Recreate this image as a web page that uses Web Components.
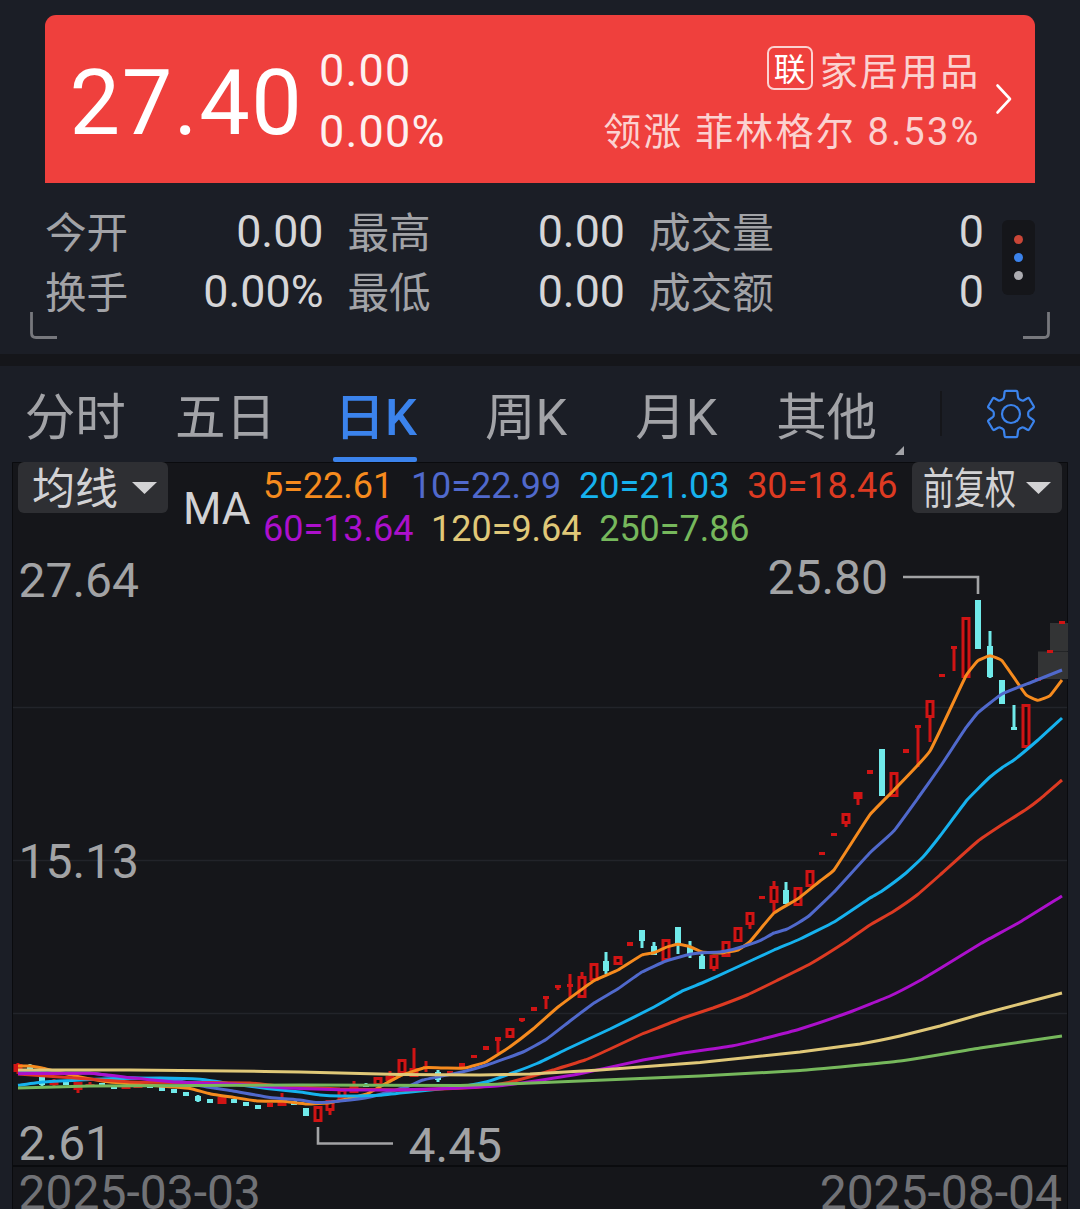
<!DOCTYPE html>
<html lang="zh-CN">
<head>
<meta charset="utf-8">
<title>27.40</title>
<style>
html,body{margin:0;padding:0;background:#1b1e26}
body{width:1080px;height:1209px;overflow:hidden;font-family:Roboto,"Noto Sans CJK SC",sans-serif}
</style>
</head>
<body>
<stock-page></stock-page>
<script>
const define = (name, html, setup) => customElements.define(name, class extends HTMLElement {
  connectedCallback() {
    if (this.shadowRoot) return;
    const root = this.attachShadow({ mode: 'open' });
    const t = document.createElement('template');
    t.innerHTML = html;
    root.append(t.content.cloneNode(true));
    if (setup) setup(this, root);
  }
});

define('price-card', `
<style>
:host{display:flex;align-items:flex-start;box-sizing:border-box;height:168px;margin:0 45px;background:#ef403d;color:#fff;border-radius:11px 11px 0 0;white-space:nowrap}
.price{font-size:90px;line-height:110px;letter-spacing:1.6px;margin:34px 0 0 24.5px;width:249.5px}
.chg{font-size:45px;line-height:60.5px;letter-spacing:1.2px;margin-top:26px;color:#fdf0f0}
.sector{margin:26px 0 0 auto;font-size:38px;letter-spacing:2.2px;line-height:60.5px;color:#fbd2d1;display:flex;flex-direction:column;align-items:flex-end}
.row{display:flex;align-items:center;height:60.5px}
.cn{position:relative;top:1px}
.tag{box-sizing:border-box;width:46px;height:44px;border:2px solid #fbd2d1;border-radius:7px;color:#fff;font-size:32px;letter-spacing:0;line-height:44px;text-align:center;margin:0 7px 6px 0}
svg{margin:68px 23px 0 14.5px;width:17px;height:32px}
</style>
<div class="price">27.40</div>
<div class="chg"><div>0.00</div><div>0.00%</div></div>
<div class="sector"><div class="row"><span class="tag">联</span><span class="cn">家居用品</span></div><div class="row">领涨 菲林格尔 8.53%</div></div>
<svg viewBox="0 0 17 32"><path d="M2.5 2.5L15 16L2.5 29.5" fill="none" stroke="#fff" stroke-width="2.6" stroke-linecap="round" stroke-linejoin="round"/></svg>`);

define('quote-stat', `
<style>
:host{display:flex;justify-content:space-between;align-items:flex-start;line-height:60px;white-space:nowrap}
.l{font-size:41.6px;color:#a2a3a7;padding-top:3px;height:57px}
.v{font-size:44.8px;color:#d6d6d8;padding-top:.5px;height:59px}
</style>
<span class="l"><slot></slot></span><span class="v"><slot name="value"></slot></span>`);

define('quote-stats', `
<style>
:host{display:flex;align-items:flex-start;padding:18px 45px 0}
.g{display:grid;grid-template-columns:278.5px 277.5px 335px;column-gap:24px;grid-auto-rows:60px}
.chip{margin:19px 0 0 18px;width:33px;height:75px;border-radius:6px;background:#15161a;display:flex;flex-direction:column;align-items:center;justify-content:center;gap:9px}
i{width:9px;height:9px;border-radius:50%}
</style>
<div class="g">
<quote-stat>今开<span slot="value">0.00</span></quote-stat><quote-stat>最高<span slot="value">0.00</span></quote-stat><quote-stat>成交量<span slot="value">0</span></quote-stat>
<quote-stat>换手<span slot="value">0.00%</span></quote-stat><quote-stat>最低<span slot="value">0.00</span></quote-stat><quote-stat>成交额<span slot="value">0</span></quote-stat>
</div>
<div class="chip"><i style="background:#c94637"></i><i style="background:#3b83ec"></i><i style="background:#acacb1"></i></div>`);

define('quote-header', `
<style>
:host{display:block;box-sizing:border-box;height:366px;padding-top:15px;border-bottom:12px solid #15161a;position:relative}
.c{position:absolute;top:312px;width:27px;height:27px}
</style>
<price-card></price-card><quote-stats></quote-stats>
<svg class="c" style="left:30px" viewBox="0 0 27 27"><path d="M1.5 0V21Q1.5 25.5 6 25.5H27" fill="none" stroke="#77787d" stroke-width="2.8"/></svg>
<svg class="c" style="right:30px" viewBox="0 0 27 27"><path d="M25.5 0V21Q25.5 25.5 21 25.5H0" fill="none" stroke="#77787d" stroke-width="2.8"/></svg>`);

define('period-tab', `
<style>
:host{display:flex;justify-content:center;box-sizing:border-box;width:150.3px;height:96px;padding-top:7px;font-size:50.5px;line-height:89px;color:#a2a3a7;position:relative;white-space:nowrap}
:host([active]){color:#3b83ec;font-weight:500}
.t{position:relative;height:89px}
:host([active]) .t::after{content:"";position:absolute;left:-1.5px;right:0;bottom:0;height:5px;border-radius:2px;background:#3b83ec}
:host([more])::after{content:"";position:absolute;left:143.5px;top:80px;width:9px;height:9px;background:#a2a3a7;clip-path:polygon(100% 0,100% 100%,0 100%)}
</style><span class="t"><slot></slot></span>`);

define('period-tabs', `
<style>
:host{display:flex;align-items:flex-start;height:96px}
.d{width:2px;height:45px;margin:25px 0 0 38px;background:#15161a}
svg{width:52px;height:52px;margin:22px 0 0 43px}
</style>
<period-tab>分时</period-tab><period-tab>五日</period-tab><period-tab active>日K</period-tab><period-tab>周K</period-tab><period-tab>月K</period-tab><period-tab more>其他</period-tab>
<span class="d"></span>
<svg viewBox="-26 -26 52 52" fill="none" stroke="#3b83ec" stroke-width="2.2" stroke-linejoin="round"><circle r="9"/><path d="M-5 -23.2H5Q6.3 -23.2 6.4 -22L7 -17Q7.2 -15.4 8.4 -14.8L10.4 -13.7Q11.6 -13 13 -13.8L16.4 -15.8Q17.6 -16.4 18.3 -15.2L22.6 -8Q23.3 -6.8 22.2 -6L18.3 -3.2Q17.2 -2.3 17.2 -1V1Q17.2 2.3 18.3 3.2L22.2 6Q23.3 6.8 22.6 8L18.3 15.2Q17.6 16.4 16.4 15.8L13 13.8Q11.6 13 10.4 13.7L8.4 14.8Q7.2 15.4 7 17L6.4 22Q6.3 23.2 5 23.2H-5Q-6.3 23.2 -6.4 22L-7 17Q-7.2 15.4 -8.4 14.8L-10.4 13.7Q-11.6 13 -13 13.8L-16.4 15.8Q-17.6 16.4 -18.3 15.2L-22.6 8Q-23.3 6.8 -22.2 6L-18.3 3.2Q-17.2 2.3 -17.2 1V-1Q-17.2 -2.3 -18.3 -3.2L-22.2 -6Q-23.3 -6.8 -22.6 -8L-18.3 -15.2Q-17.6 -16.4 -16.4 -15.8L-13 -13.8Q-11.6 -13 -10.4 -13.7L-8.4 -14.8Q-7.2 -15.4 -7 -17L-6.4 -22Q-6.3 -23.2 -5 -23.2Z"/></svg>`);

define('drop-button', `
<style>
:host{display:flex;align-items:center;justify-content:space-between;box-sizing:border-box;width:150px;height:51px;padding:0 11px 0 14px;border-radius:6px;background:#2e2f33;color:#d2d2d4;font-size:43px;line-height:51px;white-space:nowrap}
.t{transform-origin:0 50%;padding-top:2px;height:49px}
:host([condensed]){padding-left:11px}
:host([condensed]) .t{transform:scaleX(.72);width:95px}
svg{width:25px;height:12px;flex:none}
</style><span class="t"><slot></slot></span><svg viewBox="0 0 25 12"><path d="M0 0H25L12.5 12Z" fill="#d2d2d4"/></svg>`);

define('ma-legend', `
<style>
:host{display:flex;align-items:flex-start;white-space:pre}
b{font-weight:400;font-size:44px;line-height:60px;color:#d2d2d4;margin-top:17px;width:80px}
.v{font-size:36px;line-height:42.5px;margin-top:3px;letter-spacing:-.04px}
</style>
<b>MA</b><div class="v"><div><span style="color:#f68b1e">5=22.61</span>  <span style="color:#5069cc">10=22.99</span>  <span style="color:#16b2ee">20=21.03</span>  <span style="color:#dd3a22">30=18.46</span></div><div><span style="color:#ac10cc">60=13.64</span>  <span style="color:#e0c878">120=9.64</span>  <span style="color:#76b85c">250=7.86</span></div></div>`);

/* kind, wick top, body top, body bottom, wick bottom; r = solid rise, h = hollow rise, d = flat day, g = fall */
const CANDLES = `r 1063 1064 1072 1074;g 1064 1067 1070 1071;g 1075 1075 1085 1086;r 1079 1080 1085 1086;g 1080 1080 1085 1085;h 1082 1082 1090 1093;r 1082 1084 1087 1087;g 1083 1083 1087 1087;g 1085 1085 1089 1089;r 1086 1086 1089 1089;r 1085 1085 1088 1088;g 1085 1085 1088 1088;g 1087 1087 1091 1091;g 1089 1089 1093 1093;g 1092 1092 1096 1096;g 1095 1096 1101 1102;g 1099 1099 1103 1103;r 1097 1097 1104 1104;g 1099 1099 1103 1103;g 1102 1102 1106 1106;g 1105 1105 1109 1109;d 1103 1103 1107 1107;r 1093 1100 1106 1106;g 1101 1101 1105 1105;g 1108 1108 1116 1116;h 1106 1106 1122 1122;h 1100 1100 1111 1115;h 1089 1089 1100 1100;r 1081 1086 1093 1093;g 1083 1084 1087 1087;h 1077 1077 1086 1086;r 1071 1076 1081 1081;h 1059 1059 1074 1074;r 1048 1068 1077 1077;d 1061 1066 1069 1072;g 1070 1072 1080 1082;d 1071 1071 1074 1074;d 1063 1063 1067 1067;d 1055 1055 1058 1058;d 1046 1046 1050 1050;d 1037 1037 1041 1053;h 1028 1028 1038 1038;d 1018 1018 1021 1022;d 1007 1007 1011 1011;d 996 996 999 1009;d 985 985 988 990;d 974 984 987 997;h 972 976 998 998;h 963 963 981 981;g 952 961 971 974;h 956 956 965 965;d 942 942 946 946;g 930 930 941 948;g 942 946 955 955;h 939 939 961 961;g 927 927 945 954;g 941 947 955 958;g 954 956 969 969;h 955 955 969 971;h 941 941 957 957;h 927 927 942 942;h 912 912 925 929;d 896 896 899 899;h 881 886 903 913;g 882 890 904 904;h 887 887 906 906;h 870 870 887 887;d 852 852 855 855;d 833 833 836 836;h 813 813 824 827;r 792 792 799 805;d 770 770 774 774;g 749 749 796 796;h 772 772 797 797;d 749 749 753 753;d 725 725 728 767;h 700 700 718 742;d 674 674 677 677;d 646 646 649 671;h 617 617 678 678;g 600 600 649 649;g 631 646 677 678;g 680 680 704 704;g 705 727 730 730;h 704 704 748 748;d 678 678 681 681;d 650 650 653 653;d 621 621 624 624`;

const LINES = [
 ['#f68b1e','18,1066 30,1066 42,1068 54,1071 80,1077 110,1082 147,1085 173,1087 190,1088.5 210,1093.7 233,1097.3 257,1101 283,1101.3 307,1104 330,1102.7 347,1099 367,1094 383,1085 402,1075 425,1067.7 445,1068 465,1068 486,1062 510,1046.7 533,1029 558,1007 594,980.7 618,970 642,955 654,952.7 666,947.3 678,944.3 690,946.7 702,952 720,953 738,950 750,941.5 774,913 798,898.7 820,881 834,870 870,814.7 894,790 930,751 966,675.7 978,660.7 990,655.7 1002,660.7 1026,694.7 1038,700.3 1050,695.7 1062,680'],
 ['#5069cc','18,1072 60,1073 90,1073 120,1077 174,1080 207,1087 233,1091 270,1097.5 300,1100 317,1102.5 340,1101 370,1097 407,1086.7 423,1080 462,1072 487,1065 523,1052 546,1039.5 570,1021 594,1003 618,988.7 642,972 666,961 690,954.3 702,952.7 720,952 738,948 760,940.7 774,933 786,929.5 798,923 810,915 834,892 870,852.7 894,830.7 918,798 942,764 966,727.7 978,712.7 1002,694 1032,682 1062,670'],
 ['#16b2ee','18,1085.3 43,1082 80,1080 110,1078.7 160,1078 200,1079.3 233,1084 267,1088.5 300,1092 320,1095 340,1096 380,1095.3 413,1091.7 447,1088.3 467,1085.7 487,1081.7 513,1072.7 537,1063.5 567,1049 610,1029 654,1007 683,990.7 702,983 733,969 774,950 800,939 834,922 870,898 882,891 906,873 923,857 940,836 967,800 978,788.7 990,777 1002,767.7 1014,760 1038,740 1062,718'],
 ['#dd3a22','18,1074 60,1077 130,1082 200,1082.5 250,1083 280,1086 340,1089 400,1090 447,1088.7 480,1087 507,1082.7 533,1076 553,1070 585,1060 610,1049 642,1034 660,1027 683,1018 713,1008 747,995 777,980.5 810,964 847,941 870,925 893,911.7 917,895 940,875 978,841 1000,826 1026,809.5 1040,799 1062,780'],
 ['#ac10cc','18,1073.7 90,1073.3 133,1078 173,1082 233,1084 285,1088 347,1090 397,1090 447,1088.5 497,1086 530,1081.7 580,1073.7 643,1060 683,1053 733,1045.7 767,1037.7 800,1029 850,1012 890,996 920,980.5 940,968.5 980,944 1020,922 1062,896'],
 ['#e0c878','18,1070 130,1070 230,1071 300,1072 400,1074.5 480,1075 530,1074 600,1070 700,1062.5 800,1052 860,1044 900,1036 940,1026 980,1014.5 1020,1004 1062,993'],
 ['#76b85c','18,1088 90,1086 200,1085.5 300,1085 460,1085.5 580,1081 700,1076 800,1070.5 900,1061 980,1048 1062,1036']
];

function smooth(str) {
  const p = str.split(' ').map(s => s.split(',').map(Number)), n = p.length;
  const m = p.map((q, i) => { const a = p[Math.max(0, i - 1)], b = p[Math.min(n - 1, i + 1)]; return (b[1] - a[1]) / (b[0] - a[0]); });
  let d = `M${p[0]}`;
  for (let i = 1; i < n; i++) {
    const h = (p[i][0] - p[i - 1][0]) / 9;
    d += `C${p[i-1][0] + h} ${p[i-1][1] + m[i-1] * h} ${p[i][0] - h} ${p[i][1] - m[i] * h} ${p[i]}`;
  }
  return d;
}

define('k-plot', `
<style>
:host{display:block}
svg{display:block;width:1056px;height:747px;font-family:Roboto,sans-serif;font-size:48px}
</style>
<svg viewBox="12 462 1056 747">
<g stroke="#22242a" stroke-width="1.5"><path d="M12 707.5H1068M12 860.5H1068M12 1013.5H1068"/></g>
<path d="M12 1166H1068" stroke="#0a0b0e" stroke-width="2"/>
<path d="M12.5 1209V462.5H1067.5V1209" fill="none" stroke="#0a0b0e"/>
<path d="M1038 651.5H1068V679H1038ZM1050 623H1068V651H1050Z" fill="#333435"/>
<g id="candles"></g>
<g id="lines" fill="none" stroke-width="3" stroke-linejoin="round"></g>
<g fill="none" stroke="#a2a3a5" stroke-width="2.6"><path d="M903 577H978V594M318 1127V1143.5H393"/></g>
<g fill="#a2a3a5">
<text x="18.5" y="596.5">27.64</text><text x="18.5" y="877.5">15.13</text><text x="18.5" y="1159.5">2.61</text>
<text x="767.5" y="594">25.80</text><text x="408.5" y="1161.5">4.45</text></g>
<g fill="#717276"><text x="18.5" y="1208.5">2025-03-03</text><text x="1062" y="1208.5" text-anchor="end">2025-08-04</text></g>
</svg>`, (host, root) => {
  let s = '';
  CANDLES.split(';').forEach((c, i) => {
    const [k, ...v] = c.split(' '), [a, b, e, f] = v.map(Number), x = 18 + 12 * i;
    const col = k === 'g' ? '#70eaea' : '#d01414';
    const rect = (w, y0, y1, fill = col) => y1 > y0 ? `<rect x="${x - w / 2}" y="${y0}" width="${w}" height="${y1 - y0}" fill="${fill}"/>` : '';
    s += rect(3, a, b) + rect(3, e, f);
    if (k === 'h') s += rect(9, b, e) + rect(3, b + 3, e - 3, '#1a090c');
    else s += rect(k === 'r' ? 9 : 6, b, e);
  });
  root.getElementById('candles').innerHTML = s;
  root.getElementById('lines').innerHTML = LINES.map(([c, p]) => `<path d="${smooth(p)}" stroke="${c}"/>`).join('');
});

define('k-chart', `
<style>
:host{display:grid;margin:0 12px;height:747px;background:#15161a;overflow:hidden}
k-plot,.bar{grid-area:1/1}
.bar{display:flex;align-items:flex-start;padding:0 6px;height:90px}
ma-legend{margin-left:15px;width:720px}
.r{margin-left:auto}
</style>
<k-plot></k-plot>
<div class="bar"><drop-button>均线</drop-button><ma-legend></ma-legend><drop-button class="r" condensed>前复权</drop-button></div>`);

define('stock-page', `
<style>:host{display:flex;flex-direction:column;width:1080px;height:1209px;background:#1b1e26;overflow:hidden}</style>
<quote-header></quote-header><period-tabs></period-tabs><k-chart></k-chart>`);
</script>
</body>
</html>
